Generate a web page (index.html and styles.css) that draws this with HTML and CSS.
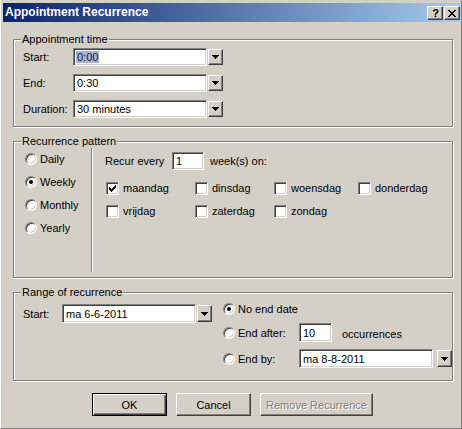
FILE: index.html
```html
<!DOCTYPE html>
<html>
<head>
<meta charset="utf-8">
<title>Appointment Recurrence</title>
<link rel="stylesheet" href="styles.css">
</head>
<body>
<div class="window">
  <div class="titlebar">
    <span class="title">Appointment Recurrence</span>
    <div class="caption-btns">
      <span class="cbtn help">?</span>
      <span class="cbtn close">
        <svg width="8" height="7" viewBox="0 0 8 7" shape-rendering="crispEdges"><path d="M0 0h2v1h-2z M6 0h2v1h-2z M1 1h2v1h-2z M5 1h2v1h-2z M2 2h4v1h-4z M3 3h2v1h-2z M2 4h4v1h-4z M1 5h2v1h-2z M5 5h2v1h-2z M0 6h2v1h-2z M6 6h2v1h-2z" fill="#000"/></svg>
      </span>
    </div>
  </div>

  <div class="client">
    <div class="group g1">
      <span class="gtitle">Appointment time</span>
      <div class="row">
        <span class="lbl">Start:</span>
        <div class="edit w134"><span class="sel">0:00</span></div>
        <span class="dd"><svg width="7" height="4" viewBox="0 0 7 4" shape-rendering="crispEdges"><path d="M0 0h7v1h-7z M1 1h5v1h-5z M2 2h3v1h-3z M3 3h1v1h-1z" fill="#000"/></svg></span>
      </div>
      <div class="row">
        <span class="lbl">End:</span>
        <div class="edit w134">0:30</div>
        <span class="dd"><svg width="7" height="4" viewBox="0 0 7 4" shape-rendering="crispEdges"><path d="M0 0h7v1h-7z M1 1h5v1h-5z M2 2h3v1h-3z M3 3h1v1h-1z" fill="#000"/></svg></span>
      </div>
      <div class="row">
        <span class="lbl">Duration:</span>
        <div class="edit w134">30 minutes</div>
        <span class="dd"><svg width="7" height="4" viewBox="0 0 7 4" shape-rendering="crispEdges"><path d="M0 0h7v1h-7z M1 1h5v1h-5z M2 2h3v1h-3z M3 3h1v1h-1z" fill="#000"/></svg></span>
      </div>
    </div>

    <div class="group g2">
      <span class="gtitle">Recurrence pattern</span>
      <div class="radios">
        <div class="radio-row"><span class="radio"></span><span>Daily</span></div>
        <div class="radio-row"><span class="radio on"></span><span>Weekly</span></div>
        <div class="radio-row"><span class="radio"></span><span>Monthly</span></div>
        <div class="radio-row"><span class="radio"></span><span>Yearly</span></div>
      </div>
      <div class="vsep"></div>
      <div class="pattern">
        <div class="recur-row">
          <span class="recur-lbl">Recur every</span>
          <div class="edit w32">1</div>
          <span class="weeks">week(s) on:</span>
        </div>
        <div class="days">
          <div class="check-item"><span class="cb"><svg width="7" height="7" viewBox="0 0 7 7" shape-rendering="crispEdges"><path d="M6 0h1v1h-1z M5 1h2v1h-2z M0 2h1v1h-1z M4 2h3v1h-3z M0 3h2v1h-2z M3 3h3v1h-3z M0 4h5v1h-5z M1 5h3v1h-3z M2 6h1v1h-1z" fill="#000"/></svg></span><span>maandag</span></div>
          <div class="check-item"><span class="cb"></span><span>dinsdag</span></div>
          <div class="check-item"><span class="cb"></span><span>woensdag</span></div>
          <div class="check-item"><span class="cb"></span><span>donderdag</span></div>
          <div class="check-item"><span class="cb"></span><span>vrijdag</span></div>
          <div class="check-item"><span class="cb"></span><span>zaterdag</span></div>
          <div class="check-item"><span class="cb"></span><span>zondag</span></div>
        </div>
      </div>
    </div>

    <div class="group g3">
      <span class="gtitle">Range of recurrence</span>
      <div class="range-start">
        <span class="lbl2">Start:</span>
        <div class="edit w134 h19">ma 6-6-2011</div>
        <span class="dd h17"><svg width="7" height="4" viewBox="0 0 7 4" shape-rendering="crispEdges"><path d="M0 0h7v1h-7z M1 1h5v1h-5z M2 2h3v1h-3z M3 3h1v1h-1z" fill="#000"/></svg></span>
      </div>
      <div class="range-end">
        <div class="radio-row r1"><span class="radio on"></span><span>No end date</span></div>
        <div class="radio-row r2"><span class="radio"></span><span class="rlbl">End after:</span><div class="edit w33 h19">10</div><span class="occ">occurrences</span></div>
        <div class="radio-row r3"><span class="radio"></span><span class="rlbl">End by:</span><div class="edit w134 h19">ma 8-8-2011</div>
          <span class="dd h17"><svg width="7" height="4" viewBox="0 0 7 4" shape-rendering="crispEdges"><path d="M0 0h7v1h-7z M1 1h5v1h-5z M2 2h3v1h-3z M3 3h1v1h-1z" fill="#000"/></svg></span>
        </div>
      </div>
    </div>

    <div class="buttons">
      <span class="btn default">OK</span>
      <span class="btn">Cancel</span>
      <span class="btn wide disabled">Remove Recurrence</span>
    </div>
  </div>
</div>
</body>
</html>
```

FILE: styles.css
```css
html, body {
  margin: 0;
  padding: 0;
}

body {
  width: 462px;
  height: 429px;
  overflow: hidden;
  background: #d4d0c8;
  font-family: "Liberation Sans", Arial, sans-serif;
  font-size: 11px;
  color: #000;
}

.window {
  box-sizing: border-box;
  width: 462px;
  height: 429px;
  border-top: 1px solid #d4d0c8;
  border-left: 1px solid #fff;
  border-right: 1px solid #808080;
  border-bottom: 1px solid #808080;
  padding: 2px 0 0 2px;
  display: flex;
  flex-direction: column;
}

/* Title bar */
.titlebar {
  height: 19px;
  flex: none;
  display: flex;
  align-items: flex-start;
  padding-left: 2px;
  background: linear-gradient(to right, #0a246a, #a6caf0);
}

.title {
  flex: 1;
  line-height: 19px;
  font-size: 12px;
  font-weight: bold;
  color: #fff;
  white-space: nowrap;
}

.caption-btns {
  display: flex;
  gap: 1px;
  margin-top: 3px;
  margin-right: 1px;
}

.cbtn {
  box-sizing: border-box;
  width: 16px;
  height: 14px;
  background: #d4d0c8;
  border: 1px solid;
  border-color: #fff #404040 #404040 #fff;
  box-shadow: inset -1px -1px 0 #808080;
  display: flex;
  align-items: center;
  justify-content: center;
}

.cbtn.help {
  font-weight: bold;
  font-size: 11px;
  line-height: 12px;
  padding-left: 1px;
}

/* Client area */
.client {
  flex: none;
  padding: 17px 0 0 10px;
  display: flex;
  flex-direction: column;
}

.group {
  position: relative;
  flex: none;
  box-sizing: border-box;
  width: 440px;
  border: 1px solid #808080;
  box-shadow: inset 1px 1px 0 #fff, 1px 1px 0 #fff;
}

.gtitle {
  position: absolute;
  left: 7px;
  top: -8px;
  padding: 0 1px;
  line-height: 14px;
  background: #d4d0c8;
  white-space: nowrap;
}

.g1 {
  height: 88px;
  padding: 8px 0 0 9px;
  display: flex;
  flex-direction: column;
  gap: 8px;
}

.row {
  display: flex;
  align-items: center;
  height: 18px;
}

.lbl {
  width: 50px;
}

.edit {
  box-sizing: border-box;
  height: 18px;
  flex: none;
  background: #fff;
  border: 1px solid;
  border-color: #808080 #fff #fff #808080;
  box-shadow: inset 1px 1px 0 #404040, inset -1px -1px 0 #d4d0c8;
  padding-left: 3px;
  display: flex;
  align-items: center;
  white-space: nowrap;
}

.w134 { width: 134px; }
.w32 { width: 32px; }
.w33 { width: 33px; }
.h19 { height: 19px; }

.sel {
  background: #a6b3cb;
  color: #14225a;
  padding: 0 1px;
  margin-left: -1px;
  line-height: 12px;
}

.dd {
  box-sizing: border-box;
  width: 15px;
  height: 16px;
  flex: none;
  margin-left: 1px;
  background: #d4d0c8;
  border: 1px solid;
  border-color: #fff #404040 #404040 #fff;
  box-shadow: inset -1px -1px 0 #808080;
  display: flex;
  align-items: center;
  justify-content: center;
}

.dd svg {
  display: block;
}

.dd.h17 { height: 17px; }

/* Recurrence pattern */
.g2 {
  height: 137px;
  margin-top: 14px;
  display: flex;
}

.radios {
  box-sizing: border-box;
  width: 77px;
  padding: 9px 0 0 11px;
  display: flex;
  flex-direction: column;
  gap: 7px;
}

.radio-row {
  display: flex;
  align-items: center;
  height: 16px;
  gap: 3px;
  white-space: nowrap;
}

.radio {
  position: relative;
  box-sizing: border-box;
  width: 12px;
  height: 12px;
  flex: none;
  border-radius: 50%;
  background: #fff;
  border: 1px solid;
  border-color: #808080 #fff #fff #808080;
  box-shadow: inset 1px 1px 0 #404040, inset -1px -1px 0 #d4d0c8;
}

.radio.on::after {
  content: "";
  position: absolute;
  left: 3px;
  top: 3px;
  width: 4px;
  height: 4px;
  border-radius: 50%;
  background: #000;
}

.vsep {
  width: 0;
  border-left: 1px solid #808080;
  border-right: 1px solid #fff;
  margin: 6px 0 5px;
}

.pattern {
  padding: 10px 0 0 12px;
}

.recur-row {
  display: flex;
  align-items: center;
  height: 18px;
}

.recur-lbl {
  width: 67px;
}

.weeks {
  margin-left: 6px;
}

.days {
  display: grid;
  grid-template-columns: 89px 79px 84px auto;
  row-gap: 7px;
  margin-top: 10px;
  margin-left: 1px;
}

.check-item {
  display: flex;
  align-items: center;
  height: 16px;
  gap: 4px;
  white-space: nowrap;
}

.cb {
  box-sizing: border-box;
  width: 13px;
  height: 13px;
  flex: none;
  background: #fff;
  border: 1px solid;
  border-color: #808080 #fff #fff #808080;
  box-shadow: inset 1px 1px 0 #404040, inset -1px -1px 0 #d4d0c8;
  padding: 2px 0 0 2px;
}

.cb svg {
  display: block;
}

/* Range of recurrence */
.g3 {
  height: 89px;
  margin-top: 14px;
  display: flex;
  align-items: flex-start;
}

.range-start {
  display: flex;
  align-items: center;
  height: 19px;
  margin-top: 11px;
  padding-left: 9px;
}

.lbl2 {
  width: 39px;
}

.range-end {
  margin-left: 11px;
  padding-top: 8px;
  display: flex;
  flex-direction: column;
}

.radio-row.r2 {
  height: 19px;
  margin-top: 6px;
}

.radio-row.r3 {
  height: 19px;
  margin-top: 7px;
}

.rlbl {
  width: 58px;
}

.occ {
  margin-left: 7px;
  padding-top: 3px;
}

/* Buttons */
.buttons {
  display: flex;
  gap: 9px;
  margin-top: 12px;
  margin-left: 79px;
}

.btn {
  box-sizing: border-box;
  width: 75px;
  height: 23px;
  background: #d4d0c8;
  border: 1px solid;
  border-color: #fff #404040 #404040 #fff;
  box-shadow: inset -1px -1px 0 #808080;
  display: flex;
  align-items: center;
  justify-content: center;
  white-space: nowrap;
}

.btn.default {
  border-color: #000;
  box-shadow: inset 1px 1px 0 #fff, inset -1px -1px 0 #404040, inset -2px -2px 0 #808080;
}

.btn.wide {
  width: 113px;
}

.btn.disabled {
  color: #808080;
  text-shadow: 1px 1px 0 #fff;
}
```
